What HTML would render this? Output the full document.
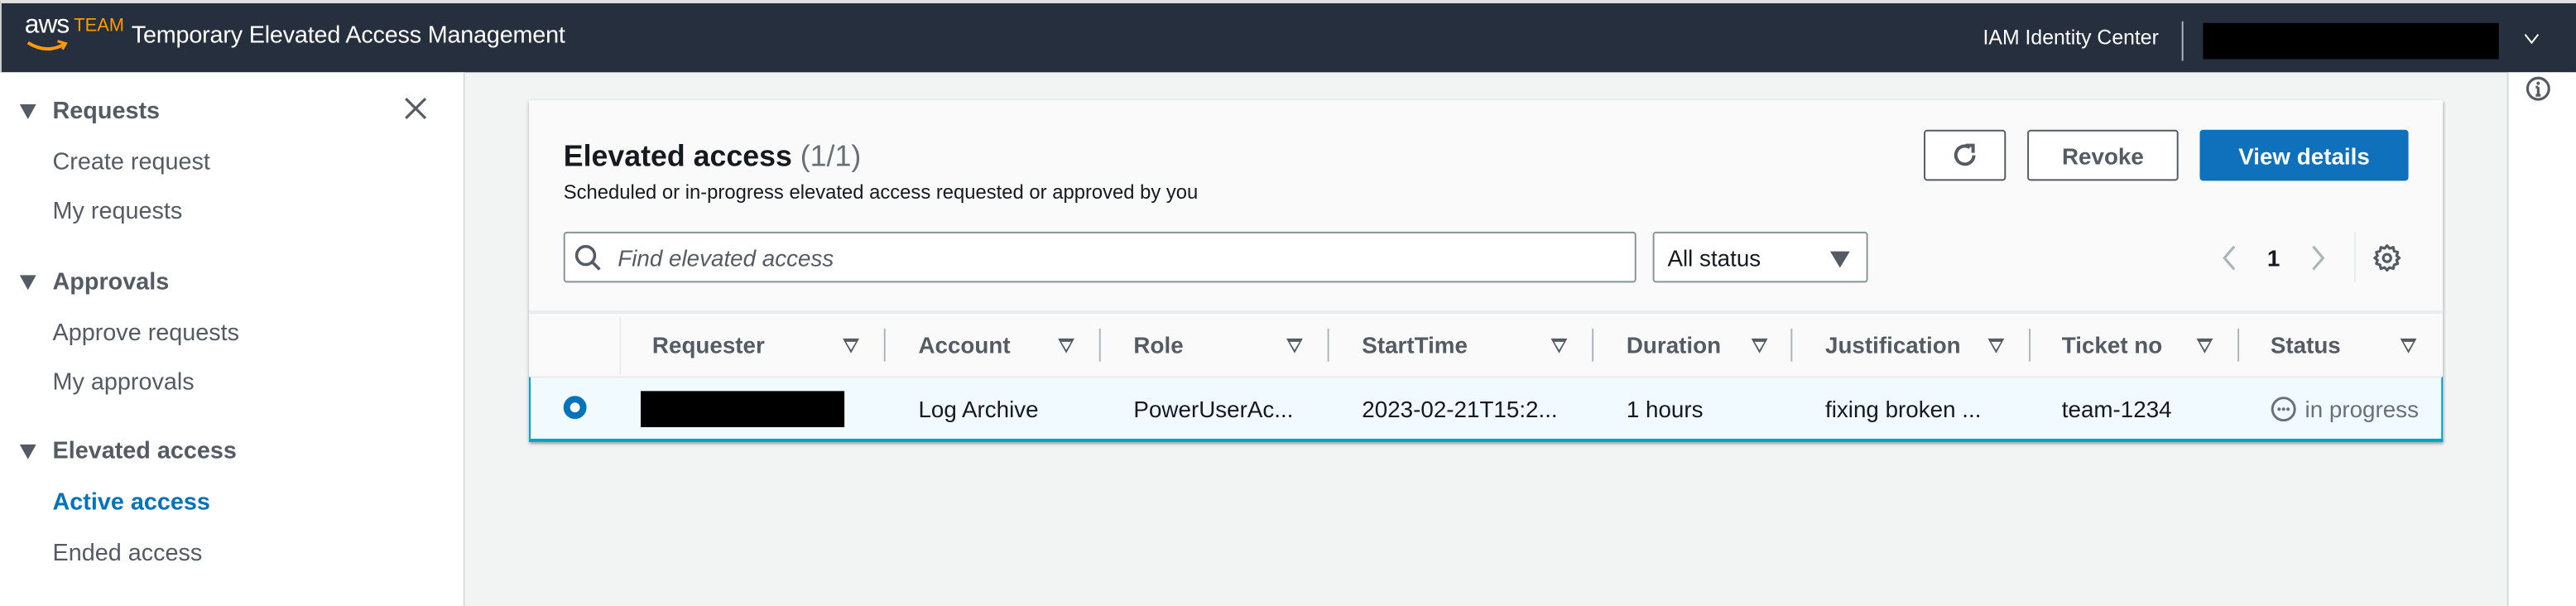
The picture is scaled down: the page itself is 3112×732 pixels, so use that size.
<!DOCTYPE html>
<html><head><meta charset="utf-8"><style>
*{box-sizing:border-box;margin:0;padding:0}
html,body{width:3112px;height:732px;overflow:hidden;background:#f2f3f3;font-family:"Liberation Sans",Arial,sans-serif}
#w{position:absolute;left:0;top:0;width:1568px;height:369px;transform:scale(1.98469);transform-origin:0 0;background:#f2f3f3}
.a{position:absolute;white-space:nowrap}
.top{left:0;top:0;width:1568px;height:44px;background:#252f3e;border-top:2px solid #e0e0e0;border-left:1px solid #ccc}
.side{left:0;top:44px;width:283px;height:325px;background:#fff;border-right:1px solid #d5dbdb}
.nh{font-size:14.5px;font-weight:bold;color:#545b64;left:32px;transform:translateY(-50%)}
.tri{left:12px;width:0;height:0;border-left:5px solid transparent;border-right:5px solid transparent;border-top:9px solid #545b64;transform:translateY(-50%)}
.ni{font-size:14.5px;color:#545b64;left:32px;transform:translateY(-50%)}
.card{left:322px;top:61px;width:1165px;height:208px;background:#fafafa;box-shadow:0 1px 2px rgba(0,28,36,.3),1px 1px 1px rgba(0,28,36,.1)}
.btn{border:1px solid #545b64;border-radius:2px;background:#fff;top:79px;height:31px;font-size:14px;font-weight:bold;color:#545b64;display:flex;align-items:center;justify-content:center}
.hd{font-size:14px;font-weight:bold;color:#545b64;top:210px;transform:translateY(-50%)}
.ht{top:206px;width:0;height:0;border-left:5px solid transparent;border-right:5px solid transparent;border-top:9px solid #545b64}
.ht::after{content:"";position:absolute;left:-3px;top:-7.5px;border-left:3px solid transparent;border-right:3px solid transparent;border-top:5px solid #fafafa}
.dv{top:200px;width:1px;height:20px;background:#aab7b8}
.cl{font-size:14px;color:#16191f;top:249px;transform:translateY(-50%)}
</style></head><body><div id="w">
<div class="a top"></div>
<div class="a" style="left:15px;top:7px;font-size:16px;color:#fff;letter-spacing:-.5px">aws</div>
<div class="a" style="left:45px;top:10px;font-size:11px;color:#ff9900">TEAM</div>
<svg class="a" style="left:15px;top:24px" width="27" height="8" viewBox="0 0 27 8"><path d="M2 2 Q13 9 24 3" stroke="#ff9900" stroke-width="2" fill="none"/><path d="M20 1 L25 2.5 L23 6" stroke="#ff9900" stroke-width="1.6" fill="none"/></svg>
<div class="a" style="left:80px;top:14px;font-size:14.5px;color:#fff;letter-spacing:-.1px">Temporary Elevated Access Management</div>
<div class="a" style="left:1207px;top:16px;font-size:12.5px;color:#fff">IAM Identity Center</div>
<div class="a" style="left:1328px;top:13px;width:1px;height:24px;background:#aab7b8"></div>
<div class="a" style="left:1341px;top:14px;width:180px;height:22px;background:#000"></div>
<svg class="a" style="left:1536px;top:18px" width="10" height="10" viewBox="0 0 10 10"><path d="M1 3 L5 8 L9 3" stroke="#fff" stroke-width="1" fill="none"/></svg>
<div class="a side"></div>
<svg class="a" style="left:245px;top:58px" width="16" height="16" viewBox="0 0 16 16"><path d="M2 2L14 14M14 2L2 14" stroke="#545b64" stroke-width="1.6"/></svg>
<div class="a tri" style="top:68px"></div><div class="a nh" style="top:68px">Requests</div>
<div class="a ni" style="top:99px">Create request</div>
<div class="a ni" style="top:129px">My requests</div>
<div class="a tri" style="top:172px"></div><div class="a nh" style="top:172px">Approvals</div>
<div class="a ni" style="top:203px">Approve requests</div>
<div class="a ni" style="top:233px">My approvals</div>
<div class="a tri" style="top:275px"></div><div class="a nh" style="top:275px">Elevated access</div>
<div class="a ni" style="top:306px;color:#0073bb;font-weight:bold">Active access</div>
<div class="a ni" style="top:337px">Ended access</div>
<div class="a" style="left:1526px;top:44px;width:42px;height:325px;background:#fff;border-left:1px solid #d5dbdb"></div>
<svg class="a" style="left:1537px;top:46px" width="16" height="16" viewBox="0 0 16 16"><circle cx="8" cy="8" r="6.5" stroke="#545b64" stroke-width="1.6" fill="none"/><path d="M8 7V12M6.5 12H9.5M6.5 7H8" stroke="#545b64" stroke-width="1.6"/><circle cx="8" cy="4.7" r="1" fill="#545b64"/></svg>
<div class="a card"></div>
<div class="a" style="left:343px;top:85px;font-size:18px;font-weight:bold;color:#16191f">Elevated access <span style="font-weight:normal;color:#687078">(1/1)</span></div>
<div class="a" style="left:343px;top:110px;font-size:12px;color:#16191f">Scheduled or in-progress elevated access requested or approved by you</div>
<div class="a btn" style="left:1171px;width:50px"><svg width="18" height="18" viewBox="0 0 18 18"><path d="M14.5 8.5A5.5 5.5 0 1 1 12 3.8" stroke="#545b64" stroke-width="2" fill="none"/><path d="M9.5 2.5H14V7" stroke="#545b64" stroke-width="2" fill="none"/></svg></div>
<div class="a btn" style="left:1234px;width:92px">Revoke</div>
<div class="a btn" style="left:1339px;width:127px;background:#0f70bc;border-color:#0f70bc;color:#fff">View details</div>
<div class="a" style="left:343px;top:141px;width:653px;height:31px;background:#fff;border:1px solid #879596;border-radius:2px"></div>
<svg class="a" style="left:349px;top:148px" width="18" height="18" viewBox="0 0 18 18"><circle cx="7.5" cy="7.5" r="5.5" stroke="#545b64" stroke-width="1.8" fill="none"/><path d="M11.5 11.5L16 16" stroke="#545b64" stroke-width="1.8"/></svg>
<div class="a" style="left:376px;top:149px;font-size:14px;font-style:italic;color:#545b64">Find elevated access</div>
<div class="a" style="left:1006px;top:141px;width:131px;height:31px;background:#fff;border:1px solid #879596;border-radius:2px"></div>
<div class="a" style="left:1015px;top:149px;font-size:14px;color:#16191f">All status</div>
<div class="a" style="left:1114px;top:153px;border-left:6px solid transparent;border-right:6px solid transparent;border-top:10px solid #545b64"></div>
<svg class="a" style="left:1350px;top:148px" width="12" height="18" viewBox="0 0 12 18"><path d="M10 2L4 9L10 16" stroke="#aab7b8" stroke-width="1.6" fill="none"/></svg>
<div class="a" style="left:1380px;top:149px;font-size:14px;font-weight:bold;color:#16191f">1</div>
<svg class="a" style="left:1406px;top:148px" width="12" height="18" viewBox="0 0 12 18"><path d="M2 2L8 9L2 16" stroke="#aab7b8" stroke-width="1.6" fill="none"/></svg>
<div class="a" style="left:1433px;top:141px;width:1px;height:31px;background:#eaeded"></div>
<svg class="a" style="left:1444px;top:148px" width="18" height="18" viewBox="0 0 18 18"><path d="M9 1.5L10.5 3.2L12.8 2.5L13.3 4.8L15.5 5.5L14.8 7.7L16.5 9L14.8 10.3L15.5 12.5L13.3 13.2L12.8 15.5L10.5 14.8L9 16.5L7.5 14.8L5.2 15.5L4.7 13.2L2.5 12.5L3.2 10.3L1.5 9L3.2 7.7L2.5 5.5L4.7 4.8L5.2 2.5L7.5 3.2Z" stroke="#545b64" stroke-width="1.6" fill="none" stroke-linejoin="round"/><circle cx="9" cy="9" r="2.3" stroke="#545b64" stroke-width="1.6" fill="none"/></svg>
<div class="a" style="left:322px;top:189px;width:1165px;height:2px;background:#eaeded"></div>
<div class="a" style="left:377px;top:193px;width:1px;height:35px;background:#eaeded"></div>
<div class="a hd" style="left:397px">Requester</div><div class="a ht" style="left:513px"></div><div class="a dv" style="left:538px"></div>
<div class="a hd" style="left:559px">Account</div><div class="a ht" style="left:644px"></div><div class="a dv" style="left:669px"></div>
<div class="a hd" style="left:690px">Role</div><div class="a ht" style="left:783px"></div><div class="a dv" style="left:808px"></div>
<div class="a hd" style="left:829px">StartTime</div><div class="a ht" style="left:944px"></div><div class="a dv" style="left:969px"></div>
<div class="a hd" style="left:990px">Duration</div><div class="a ht" style="left:1066px"></div><div class="a dv" style="left:1090px"></div>
<div class="a hd" style="left:1111px">Justification</div><div class="a ht" style="left:1210px"></div><div class="a dv" style="left:1235px"></div>
<div class="a hd" style="left:1255px">Ticket no</div><div class="a ht" style="left:1337px"></div><div class="a dv" style="left:1362px"></div>
<div class="a hd" style="left:1382px">Status</div><div class="a ht" style="left:1461px"></div>
<div class="a" style="left:322px;top:229px;width:1165px;height:40px;background:#f1faff;border-left:1px solid #00a1c9;border-right:1px solid #00a1c9;border-bottom:2px solid #00a1c9;border-top:1px solid #eaeded"></div>
<div class="a" style="left:343px;top:241px;width:14px;height:14px;border-radius:50%;border:4px solid #0073bb;background:#fff"></div>
<div class="a" style="left:390px;top:238px;width:124px;height:22px;background:#000"></div>
<div class="a cl" style="left:559px">Log Archive</div>
<div class="a cl" style="left:690px">PowerUserAc...</div>
<div class="a cl" style="left:829px">2023-02-21T15:2...</div>
<div class="a cl" style="left:990px">1 hours</div>
<div class="a cl" style="left:1111px">fixing broken ...</div>
<div class="a cl" style="left:1255px">team-1234</div>
<svg class="a" style="left:1382px;top:241px" width="16" height="16" viewBox="0 0 16 16"><circle cx="8" cy="8" r="6.8" stroke="#687078" stroke-width="1.5" fill="none"/><circle cx="5.3" cy="8" r="1" fill="#687078"/><circle cx="8" cy="8" r="1" fill="#687078"/><circle cx="10.7" cy="8" r="1" fill="#687078"/></svg>
<div class="a cl" style="left:1403px;color:#687078">in progress</div>
</div></body></html>
